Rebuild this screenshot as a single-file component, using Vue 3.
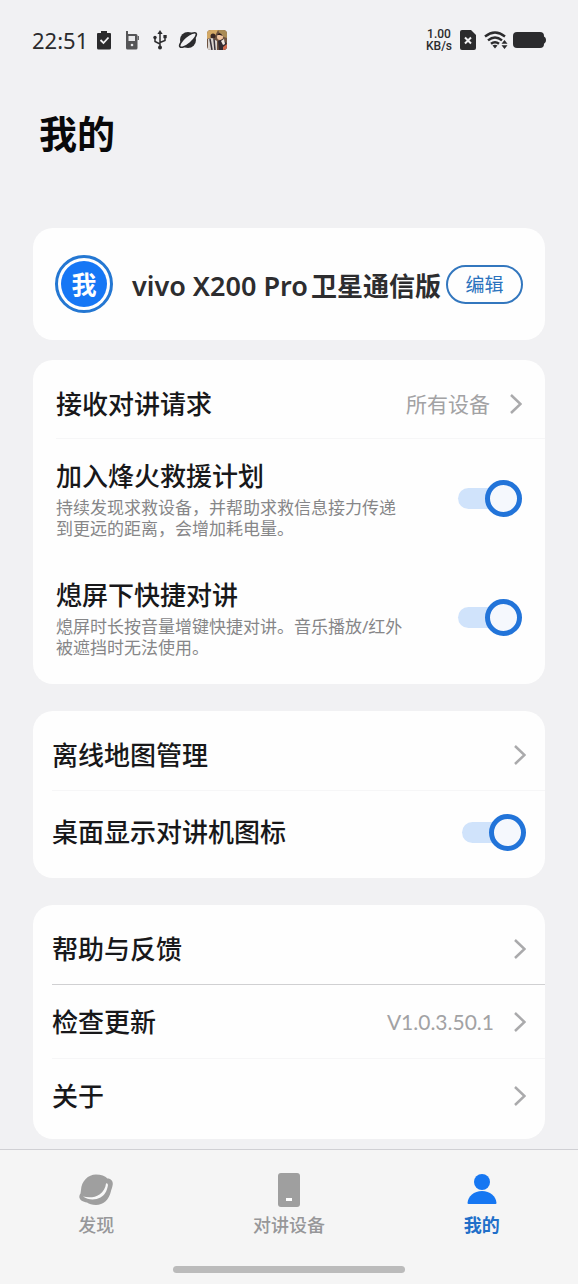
<script setup>
import { ref } from 'vue'

const rescue = ref(true)
const quickTalk = ref(true)
const showIcon = ref(true)
</script>

<template>
  <div class="screen">
    <header class="status">
      <span class="time">22:51</span>
      <svg class="s-clip" viewBox="0 0 14 20" width="14" height="20">
        <path d="M1 3h3V1h6v2h3q1 0 1 1v14q0 1.500-1.500 1.500h-11Q0 19.500 0 18V4q0-1 1-1z" fill="#2b2b2d" />
        <path d="M3.500 10l3 3 5-5.500" fill="none" stroke="#f1f1f3" stroke-width="1.800" />
      </svg>
      <svg class="s-radio" viewBox="0 0 14 20" width="14" height="20">
        <path d="M1 1h2v3h8q1.500 0 1.500 1.500V18q0 1.500-1.500 1.500H2.500Q1 19.500 1 18z" fill="#555557" />
        <rect x="3.500" y="6" width="6.500" height="5" fill="#e9e9eb" />
        <circle cx="7" cy="15" r="1.300" fill="#e9e9eb" />
        <path d="M13.300 6v4" stroke="#555557" stroke-width="1.200" />
      </svg>
      <svg class="s-usb" viewBox="0 0 14 20" width="14" height="20" fill="none" stroke="#2b2b2d" stroke-width="1.500">
        <path d="M7 3v14M7 14L2 11.500V8M7 12.500l5-2V7" />
        <path d="M7 0l2.600 4H4.400z" fill="#2b2b2d" stroke="none" />
        <circle cx="7" cy="17.500" r="2" fill="#2b2b2d" stroke="none" />
        <circle cx="2" cy="7.500" r="1.700" fill="#2b2b2d" stroke="none" />
        <path d="M10.400 5h3.300v3.200h-3.300z" fill="#2b2b2d" stroke="none" />
      </svg>
      <svg class="s-planet" viewBox="0 0 20 18" width="20" height="18">
        <circle cx="10" cy="9" r="8" fill="#2b2b2d" />
        <ellipse cx="10" cy="9" rx="10.500" ry="3.600" transform="rotate(-40 10 9)" fill="#f1f1f3" stroke="#2b2b2d" stroke-width="1.600" />
      </svg>
      <svg class="s-app" viewBox="0 0 20 20" width="20" height="20">
        <defs><clipPath id="appClip"><rect width="20" height="20" rx="4" /></clipPath></defs>
        <g clip-path="url(#appClip)">
          <rect width="20" height="20" fill="#6e5340" />
          <path d="M0 0h11L8 6 0 9z" fill="#d3a865" />
          <path d="M11 0h9v8l-6-2z" fill="#a98b55" />
          <circle cx="6" cy="6" r="2.500" fill="#3b2824" />
          <path d="M1 9l4-1 5 3v9H1z" fill="#dad4ce" />
          <path d="M3 9l2 11M7 9l1 11" stroke="#37323a" stroke-width="1.500" />
          <circle cx="13" cy="7" r="3" fill="#f0c4a0" />
          <path d="M10 5q3-4 6 1l-3-1z" fill="#2c1e1c" />
          <path d="M11 11l5-2 4 5v6h-8z" fill="#322b30" />
          <path d="M14 11l2 4 2-1-1-5z" fill="#efe7df" />
          <path d="M16 17l4-3v6h-4z" fill="#d06a4c" />
        </g>
      </svg>
      <span class="rate">1.00<br />KB/s</span>
      <svg class="s-sim" viewBox="0 0 16 20" width="16" height="20">
        <path d="M2 0h9l5 5v13q0 2-2 2H2q-2 0-2-2V2q0-2 2-2z" fill="#2b2b2d" />
        <path d="M5 7.500l6 6M11 7.500l-6 6" stroke="#f1f1f3" stroke-width="2" />
      </svg>
      <svg class="s-wifi" viewBox="0 0 24 18" width="24" height="18">
        <g fill="none" stroke="#2b2b2d" stroke-width="2.400">
          <path d="M1 5.500Q11 -2.500 21 5.500" />
          <path d="M4 9.300Q11 3.500 18 9.300" />
          <path d="M7 12.800Q11 9.500 15 12.800" />
        </g>
        <path d="M8.500 14.500Q11 12.800 13.500 14.500L11 17.500z" fill="#2b2b2d" />
        <path d="M20.500 9l3 3.700h-6zM20.500 18l3-3.700h-6z" fill="#2b2b2d" />
      </svg>
      <svg class="s-battery" viewBox="0 0 33 16" width="33" height="16">
        <rect width="31" height="16" rx="4" fill="#2b2b2d" />
        <path d="M30 4q3 1 3 4t-3 4z" fill="#2b2b2d" />
      </svg>
    </header>

    <main>
      <h1>我的</h1>

      <section class="card profile">
        <div class="avatar"><span>我</span></div>
        <h2><span class="model">vivo X200 Pro</span><span>卫星通信版</span></h2>
        <button type="button" class="edit">编辑</button>
      </section>

      <section class="card talk">
        <button type="button" class="row first">
          <span class="label">接收对讲请求</span>
          <span class="value">所有设备</span>
          <svg class="chevron" viewBox="0 0 12 20" width="12" height="20"><path d="M1 1L10.500 10L1 19" /></svg>
        </button>
        <hr />
        <div class="row tall">
          <label class="text" for="rescue">
            <span class="label">加入烽火救援计划</span>
            <span class="desc">持续发现求救设备，并帮助求救信息接力传递<br />到更远的距离，会增加耗电量。</span>
          </label>
          <input id="rescue" v-model="rescue" type="checkbox" class="switch" />
        </div>
        <div class="row tall">
          <label class="text" for="quick">
            <span class="label">熄屏下快捷对讲</span>
            <span class="desc">熄屏时长按音量增键快捷对讲。音乐播放/红外<br />被遮挡时无法使用。</span>
          </label>
          <input id="quick" v-model="quickTalk" type="checkbox" class="switch" />
        </div>
      </section>

      <section class="card maps">
        <button type="button" class="row first">
          <span class="label">离线地图管理</span>
          <svg class="chevron" viewBox="0 0 12 20" width="12" height="20"><path d="M1 1L10.500 10L1 19" /></svg>
        </button>
        <hr />
        <div class="row roomy">
          <label class="label" for="desktop">桌面显示对讲机图标</label>
          <input id="desktop" v-model="showIcon" type="checkbox" class="switch" />
        </div>
      </section>

      <section class="card about">
        <button type="button" class="row first">
          <span class="label">帮助与反馈</span>
          <svg class="chevron" viewBox="0 0 12 20" width="12" height="20"><path d="M1 1L10.500 10L1 19" /></svg>
        </button>
        <hr class="strong" />
        <button type="button" class="row">
          <span class="label">检查更新</span>
          <span class="value version">V1.0.3.50.1</span>
          <svg class="chevron" viewBox="0 0 12 20" width="12" height="20"><path d="M1 1L10.500 10L1 19" /></svg>
        </button>
        <hr />
        <button type="button" class="row">
          <span class="label">关于</span>
          <svg class="chevron" viewBox="0 0 12 20" width="12" height="20"><path d="M1 1L10.500 10L1 19" /></svg>
        </button>
      </section>
    </main>

    <footer>
      <nav>
        <a href="#discover">
          <svg viewBox="0 0 34 34" width="34" height="34">
            <path d="M2 17C2.500 8 9 1.500 17 1.500C22 1.500 26 3 28.500 5.500C32 5.500 34 8 33.800 11C33.500 14 32.500 16 32 18C30 27 24 32 17 32C13 32 10 31 8 29.500C4 29 0.500 27 0.300 24Q0.300 21.500 1.500 20.500z" fill="#9f9f9f" />
            <path d="M4 23.500C10 25 16 24.500 20.500 21.500C24.500 18.500 26.500 15 27 10.500Q28.500 9.500 29 12C28 18.500 25.500 22 21.500 24.500C16 27.500 9 27 4 23.500z" fill="#f8f8f8" />
          </svg>
          <span>发现</span>
        </a>
        <a href="#devices">
          <svg viewBox="0 0 34 34" width="34" height="34">
            <rect x="6" y="0" width="22" height="34" rx="3" fill="#9f9f9f" />
            <rect x="14" y="25" width="6" height="3" fill="#fff" />
          </svg>
          <span>对讲设备</span>
        </a>
        <a href="#mine" class="active" aria-current="page">
          <svg viewBox="0 0 34 34" width="34" height="34">
            <circle cx="17" cy="9" r="8" fill="#1677f2" />
            <path d="M2.500 30C3 23 9 18 17 18S31 23 31.500 30Q31.500 31 30.500 31h-27Q2.500 31 2.500 30z" fill="#1677f2" />
          </svg>
          <span>我的</span>
        </a>
      </nav>
      <div class="home-bar"></div>
    </footer>
  </div>
</template>

<style>
body {
  background: #f1f1f3;
}
</style>

<style scoped>
.screen {
  min-height: 100vh;
  display: flex;
  flex-direction: column;
  background: #f1f1f3;
  color: #18181a;
  font-family: "Noto Sans", "Noto Sans CJK SC", sans-serif;
}
.status {
  display: flex;
  align-items: center;
  height: 80px;
  padding: 0 32px;
  color: #2b2b2d;
}
.time {
  min-width: 56px;
  font-size: 22px;
  font-weight: 400;
  line-height: 30px;
  margin-right: 9px;
}
.s-radio,
.s-usb {
  margin-left: 14px;
}
.s-planet {
  margin-left: 11px;
}
.s-app {
  margin-left: 9px;
}
.rate {
  margin-left: auto;
  text-align: center;
  font-family: Roboto, "Noto Sans", sans-serif;
  font-size: 12px;
  font-weight: 500;
  line-height: 12px;
}
.s-sim {
  margin-left: 8px;
}
.s-wifi {
  margin-left: 8px;
}
.s-battery {
  margin-left: 5px;
}
main {
  padding: 0 33px 10px;
}
h1 {
  margin: 25px 6px 67px;
  font-size: 38px;
  line-height: 56px;
  font-weight: 700;
  color: #09090a;
}
.card {
  background: #fefefe;
  border-radius: 20px;
}
.profile {
  display: flex;
  align-items: center;
  height: 112px;
  padding: 0 22px;
}
.avatar {
  box-sizing: border-box;
  flex: none;
  width: 58px;
  height: 58px;
  padding: 3px;
  border: 3px solid #2477d2;
  border-radius: 50%;
}
.avatar span {
  display: flex;
  align-items: center;
  justify-content: center;
  height: 100%;
  border-radius: 50%;
  background: #1677f5;
  color: #fff;
  font-size: 25px;
  line-height: 36px;
  font-weight: 700;
}
h2 {
  display: flex;
  align-items: baseline;
  gap: 3px;
  margin: 0 0 0 19px;
  padding-top: 3px;
  font-size: 26px;
  line-height: 36px;
  font-weight: 600;
  white-space: nowrap;
  color: #2d2d2f;
}
.model {
  font-size: 27px;
}
.edit {
  box-sizing: border-box;
  flex: none;
  width: 77px;
  height: 39px;
  margin-left: auto;
  padding: 0;
  border: 2px solid #3377be;
  border-radius: 20px;
  background: #fefefe;
  color: #2b72bd;
  font: inherit;
  font-size: 19px;
}
.talk {
  margin-top: 20px;
  padding-top: 10px;
  padding-bottom: 7px;
  --inset: 23px;
}
.maps {
  margin-top: 27px;
  padding-top: 9px;
  padding-bottom: 5px;
  --inset: 19px;
}
.about {
  margin-top: 27px;
  padding-top: 9px;
  padding-bottom: 7px;
  --inset: 19px;
}
.row {
  box-sizing: border-box;
  display: flex;
  align-items: center;
  width: 100%;
  height: 73px;
  padding: 0 var(--inset);
  border: 0;
  background: none;
  color: inherit;
  font: inherit;
  text-align: left;
}
.row.first {
  height: 70px;
}
.talk .row.first {
  height: 68px;
}
.row.tall {
  height: 119px;
}
.row.roomy {
  height: 82px;
}
.label {
  flex: 1;
  font-size: 26px;
  line-height: 38px;
  font-weight: 500;
  white-space: nowrap;
}
.text {
  flex: 1;
  display: flex;
  flex-direction: column;
  gap: 2px;
  padding-bottom: 1px;
}
.desc {
  font-size: 17px;
  line-height: 21px;
  color: #868688;
  white-space: nowrap;
}
.value {
  font-size: 21px;
  line-height: 30px;
  color: #a2a2a4;
}
.version {
  font-family: Lato, "Noto Sans", sans-serif;
}
.chevron {
  flex: none;
  margin-left: 20px;
  fill: none;
  stroke: #aaaaac;
  stroke-width: 2.5;
}
hr {
  height: 1px;
  margin: 0 0 0 var(--inset);
  border: 0;
  background: #f6f6f7;
}
hr.strong {
  background: #d0d0d2;
}
.switch {
  appearance: none;
  position: relative;
  flex: none;
  width: 64px;
  height: 37px;
  margin: 0;
}
.switch::before {
  content: "";
  position: absolute;
  inset: 8px 12px 8px 0;
  border-radius: 11px;
  background: #d0e3fb;
}
.switch::after {
  content: "";
  position: absolute;
  top: 0;
  left: 0;
  box-sizing: border-box;
  width: 37px;
  height: 37px;
  border: 5px solid #b5b5b8;
  border-radius: 50%;
  background: #f5f8fd;
}
.switch:checked::after {
  left: auto;
  right: 0;
  border-color: #2274d9;
}
footer {
  box-sizing: border-box;
  margin-top: auto;
  height: 135px;
  padding-bottom: 11px;
  display: flex;
  flex-direction: column;
  justify-content: space-between;
  border-top: 1px solid #d0d0d4;
  background: #f5f5f5;
}
nav {
  display: flex;
  padding-top: 23px;
}
nav a {
  flex: 1;
  display: flex;
  flex-direction: column;
  align-items: center;
  gap: 5px;
  color: #979799;
  font-size: 18px;
  line-height: 26px;
  font-weight: 500;
  text-decoration: none;
}
nav a.active {
  color: #216fc9;
  font-weight: 700;
}
.home-bar {
  align-self: center;
  width: 40%;
  height: 7px;
  border-radius: 4px;
  background: #bbb;
}
</style>
